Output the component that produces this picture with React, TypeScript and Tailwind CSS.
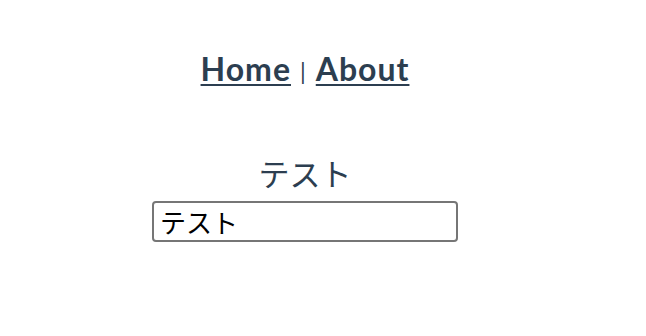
export default function App() {
  return (
    <div
      className="w-[610px] text-center text-[#2c3e50]"
      style={{ fontFamily: 'Lato, "Noto Sans CJK JP", sans-serif' }}
    >
      <div className="pt-[49px] text-[32px] leading-[40px] tracking-[1px]">
        <a href="#" className="font-bold underline decoration-2 underline-offset-[3px]">
          Home
        </a>
        <span className="mx-[9px] align-[1px] text-[23px] leading-none font-normal">|</span>
        <a href="#" className="font-bold underline decoration-2 underline-offset-[3px]">
          About
        </a>
      </div>
      <div className="mt-[62px] text-[31px] leading-[44px]" style={{ fontFamily: '"Noto Sans CJK JP", sans-serif' }}>
        テスト
      </div>
      <div className="mt-[6px] flex justify-center">
        <input
          defaultValue="テスト"
          className="h-[41px] w-[306px] rounded-[4px] border-2 border-[#767676] bg-white px-[6px] text-[26px] text-black"
          style={{ fontFamily: '"Noto Sans CJK JP", sans-serif' }}
        />
      </div>
    </div>
  )
}
